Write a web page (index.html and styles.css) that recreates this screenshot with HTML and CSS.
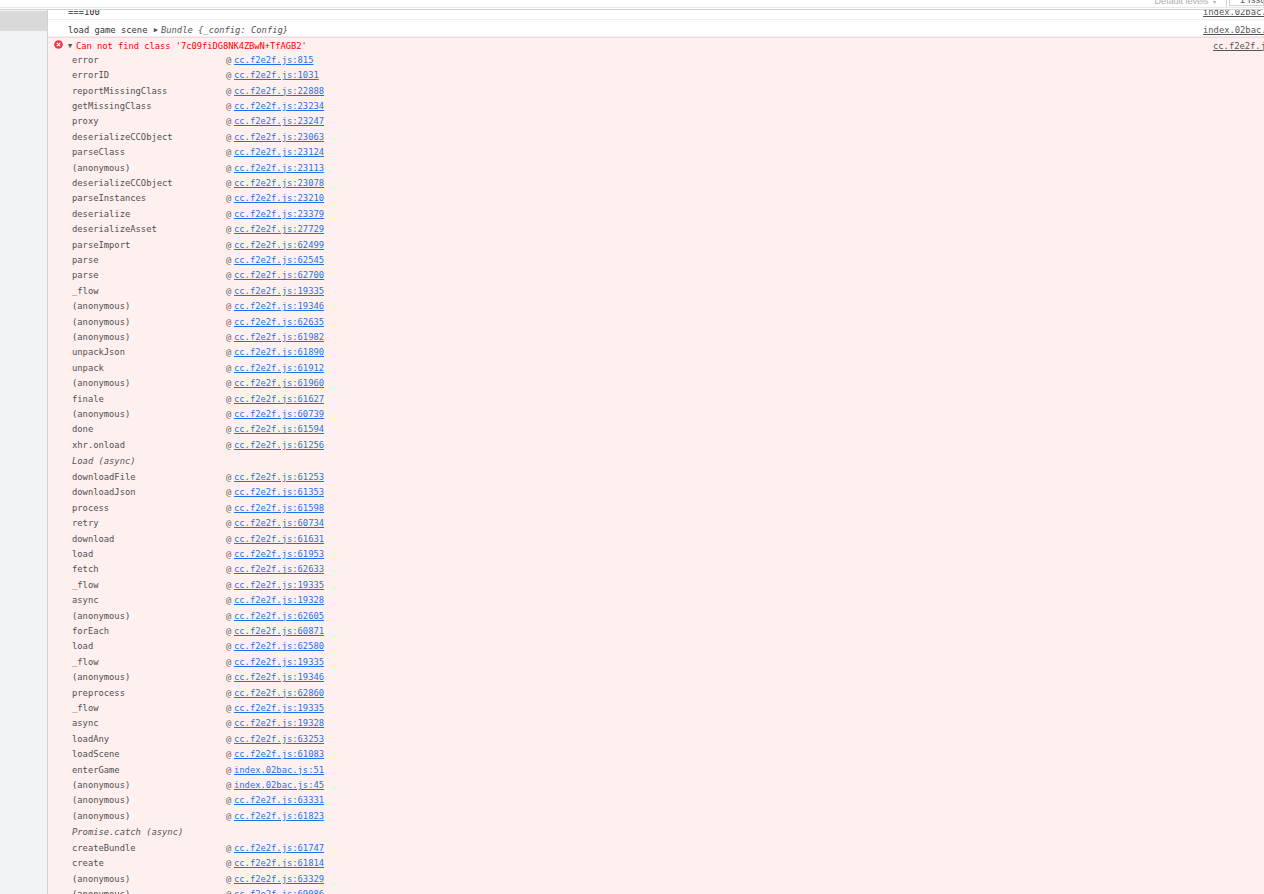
FILE: index.html
```html
<!DOCTYPE html>
<html lang="en">
<head>
<meta charset="utf-8">
<title>Console</title>
<link rel="stylesheet" href="styles.css">
</head>
<body>
<header class="toolbar">
  <span class="levels">Default levels <span class="caret">▾</span></span>
  <span class="divider"></span>
  <span class="issues">1 Issue</span>
</header>
<div class="main">
  <aside class="sidebar"><div class="selected"></div></aside>
  <section class="console">
    <div class="msg msg-clip"><span class="msg-text">===100</span><a class="src">index.02bac.js:75</a></div>
    <div class="msg msg-log"><span class="msg-text">load game scene <span class="tri">▶</span><i>Bundle {_config: Config}</i></span><a class="src">index.02bac.js:76</a></div>
    <div class="error">
      <div class="error-head">
        <svg class="err-icon" viewBox="0 0 10 10"><circle cx="5" cy="5" r="4.8" fill="#e8384a"/><path d="M3.1 3.1l3.8 3.8M6.9 3.1L3.1 6.9" stroke="#fff" stroke-width="1.3"/></svg>
        <span class="tri-down">▼</span><span class="err-text">Can not find class '7c09fiDG8NK4ZBwN+TfAGB2'</span>
        <a class="err-src">cc.f2e2f.js:815</a>
      </div>
      <div class="stack">
        <div class="row"><span>error</span><span class="at">@</span><a class="lnk">cc.f2e2f.js:815</a></div>
        <div class="row"><span>errorID</span><span class="at">@</span><a class="lnk">cc.f2e2f.js:1031</a></div>
        <div class="row"><span>reportMissingClass</span><span class="at">@</span><a class="lnk">cc.f2e2f.js:22888</a></div>
        <div class="row"><span>getMissingClass</span><span class="at">@</span><a class="lnk">cc.f2e2f.js:23234</a></div>
        <div class="row"><span>proxy</span><span class="at">@</span><a class="lnk">cc.f2e2f.js:23247</a></div>
        <div class="row"><span>deserializeCCObject</span><span class="at">@</span><a class="lnk">cc.f2e2f.js:23063</a></div>
        <div class="row"><span>parseClass</span><span class="at">@</span><a class="lnk">cc.f2e2f.js:23124</a></div>
        <div class="row"><span>(anonymous)</span><span class="at">@</span><a class="lnk">cc.f2e2f.js:23113</a></div>
        <div class="row"><span>deserializeCCObject</span><span class="at">@</span><a class="lnk">cc.f2e2f.js:23078</a></div>
        <div class="row"><span>parseInstances</span><span class="at">@</span><a class="lnk">cc.f2e2f.js:23210</a></div>
        <div class="row"><span>deserialize</span><span class="at">@</span><a class="lnk">cc.f2e2f.js:23379</a></div>
        <div class="row"><span>deserializeAsset</span><span class="at">@</span><a class="lnk">cc.f2e2f.js:27729</a></div>
        <div class="row"><span>parseImport</span><span class="at">@</span><a class="lnk">cc.f2e2f.js:62499</a></div>
        <div class="row"><span>parse</span><span class="at">@</span><a class="lnk">cc.f2e2f.js:62545</a></div>
        <div class="row"><span>parse</span><span class="at">@</span><a class="lnk">cc.f2e2f.js:62700</a></div>
        <div class="row"><span>_flow</span><span class="at">@</span><a class="lnk">cc.f2e2f.js:19335</a></div>
        <div class="row"><span>(anonymous)</span><span class="at">@</span><a class="lnk">cc.f2e2f.js:19346</a></div>
        <div class="row"><span>(anonymous)</span><span class="at">@</span><a class="lnk">cc.f2e2f.js:62635</a></div>
        <div class="row"><span>(anonymous)</span><span class="at">@</span><a class="lnk">cc.f2e2f.js:61982</a></div>
        <div class="row"><span>unpackJson</span><span class="at">@</span><a class="lnk">cc.f2e2f.js:61890</a></div>
        <div class="row"><span>unpack</span><span class="at">@</span><a class="lnk">cc.f2e2f.js:61912</a></div>
        <div class="row"><span>(anonymous)</span><span class="at">@</span><a class="lnk">cc.f2e2f.js:61960</a></div>
        <div class="row"><span>finale</span><span class="at">@</span><a class="lnk">cc.f2e2f.js:61627</a></div>
        <div class="row"><span>(anonymous)</span><span class="at">@</span><a class="lnk">cc.f2e2f.js:60739</a></div>
        <div class="row"><span>done</span><span class="at">@</span><a class="lnk">cc.f2e2f.js:61594</a></div>
        <div class="row"><span>xhr.onload</span><span class="at">@</span><a class="lnk">cc.f2e2f.js:61256</a></div>
        <div class="async"><i>Load (async)</i></div>
        <div class="row"><span>downloadFile</span><span class="at">@</span><a class="lnk">cc.f2e2f.js:61253</a></div>
        <div class="row"><span>downloadJson</span><span class="at">@</span><a class="lnk">cc.f2e2f.js:61353</a></div>
        <div class="row"><span>process</span><span class="at">@</span><a class="lnk">cc.f2e2f.js:61598</a></div>
        <div class="row"><span>retry</span><span class="at">@</span><a class="lnk">cc.f2e2f.js:60734</a></div>
        <div class="row"><span>download</span><span class="at">@</span><a class="lnk">cc.f2e2f.js:61631</a></div>
        <div class="row"><span>load</span><span class="at">@</span><a class="lnk">cc.f2e2f.js:61953</a></div>
        <div class="row"><span>fetch</span><span class="at">@</span><a class="lnk">cc.f2e2f.js:62633</a></div>
        <div class="row"><span>_flow</span><span class="at">@</span><a class="lnk">cc.f2e2f.js:19335</a></div>
        <div class="row"><span>async</span><span class="at">@</span><a class="lnk">cc.f2e2f.js:19328</a></div>
        <div class="row"><span>(anonymous)</span><span class="at">@</span><a class="lnk">cc.f2e2f.js:62605</a></div>
        <div class="row"><span>forEach</span><span class="at">@</span><a class="lnk">cc.f2e2f.js:60871</a></div>
        <div class="row"><span>load</span><span class="at">@</span><a class="lnk">cc.f2e2f.js:62580</a></div>
        <div class="row"><span>_flow</span><span class="at">@</span><a class="lnk">cc.f2e2f.js:19335</a></div>
        <div class="row"><span>(anonymous)</span><span class="at">@</span><a class="lnk">cc.f2e2f.js:19346</a></div>
        <div class="row"><span>preprocess</span><span class="at">@</span><a class="lnk">cc.f2e2f.js:62860</a></div>
        <div class="row"><span>_flow</span><span class="at">@</span><a class="lnk">cc.f2e2f.js:19335</a></div>
        <div class="row"><span>async</span><span class="at">@</span><a class="lnk">cc.f2e2f.js:19328</a></div>
        <div class="row"><span>loadAny</span><span class="at">@</span><a class="lnk">cc.f2e2f.js:63253</a></div>
        <div class="row"><span>loadScene</span><span class="at">@</span><a class="lnk">cc.f2e2f.js:61083</a></div>
        <div class="row"><span>enterGame</span><span class="at">@</span><a class="lnk">index.02bac.js:51</a></div>
        <div class="row"><span>(anonymous)</span><span class="at">@</span><a class="lnk">index.02bac.js:45</a></div>
        <div class="row"><span>(anonymous)</span><span class="at">@</span><a class="lnk">cc.f2e2f.js:63331</a></div>
        <div class="row"><span>(anonymous)</span><span class="at">@</span><a class="lnk">cc.f2e2f.js:61823</a></div>
        <div class="async"><i>Promise.catch (async)</i></div>
        <div class="row"><span>createBundle</span><span class="at">@</span><a class="lnk">cc.f2e2f.js:61747</a></div>
        <div class="row"><span>create</span><span class="at">@</span><a class="lnk">cc.f2e2f.js:61814</a></div>
        <div class="row"><span>(anonymous)</span><span class="at">@</span><a class="lnk">cc.f2e2f.js:63329</a></div>
        <div class="row"><span>(anonymous)</span><span class="at">@</span><a class="lnk">cc.f2e2f.js:69086</a></div>
      </div>
    </div>
  </section>
</div>
</body>
</html>
```
FILE: styles.css
```css
html, body { margin: 0; height: 894px; overflow: hidden; background: #fff; }
body { display: flex; flex-direction: column; font: 8.8px/15.4px "DejaVu Sans Mono", monospace; color: #444; }
a { text-decoration: underline; }

.toolbar { height: 7px; flex: none; display: flex; align-items: flex-end; justify-content: flex-end; overflow: hidden; border-bottom: 1px solid #e6e8ea; margin-bottom: 1px; font: 9px/10px "Liberation Sans", sans-serif; color: #aaaeb3; }
.caret { font-size: 6px; margin-left: 2px; }
.divider { width: 1px; height: 12px; background: #cfd1d3; margin: 0 2px 0 10px; flex: none; }
.issues { width: 35px; height: 12px; flex: none; box-sizing: border-box; border: 1px solid #cfd1d3; padding: 0 0 0 10px; line-height: 11px; letter-spacing: .3px; color: #555; white-space: nowrap; overflow: hidden; margin-bottom: 1px; }

.main { flex: 1; display: flex; min-height: 0; border-top: 1px solid #cfd1d3; }
.sidebar { width: 47px; flex: none; background: #f1f3f4; border-right: 1px solid #cfd1d3; padding-top: 1px; }
.selected { height: 20px; background: #d9d9d9; }
.console { flex: 1; min-width: 0; overflow: hidden; }

.msg { display: grid; grid-template-columns: 1fr 61px; padding-left: 20px; border-bottom: 1px solid #eceef0; overflow: hidden; white-space: nowrap; }
.msg-clip { height: 9px; line-height: 5px; }
.msg-log { height: 16px; line-height: 20px; }
.msg-text { color: #333; }
.msg i { color: #555; }
.tri { font-size: 7px; color: #555; margin: 0 3px 0 1px; vertical-align: 1px; }
.src { color: #555; overflow: hidden; }

.error { background: #fff0f0; border-top: 1px solid #ffd6d6; min-height: 900px; }
.error-head { display: flex; align-items: center; height: 12.7px; padding-top: 2px; white-space: nowrap; color: #f00; }
.err-icon { width: 9px; height: 9px; margin: 0 5px 0 6px; flex: none; position: relative; top: -2px; }
.tri-down { font-size: 7px; color: #555; width: 8px; }
.err-text { flex: 1; letter-spacing: -.05px; }
.err-src { width: 51px; flex: none; color: #555; overflow: hidden; }

.stack { padding-left: 24px; }
.row { display: grid; grid-template-columns: 154px 8px 1fr; height: 15.41px; white-space: nowrap; color: #4f4f4f; }
.at { color: #666; }
.lnk { color: #1a73e8; }
.async { height: 16.7px; line-height: 17px; color: #555; }
```
